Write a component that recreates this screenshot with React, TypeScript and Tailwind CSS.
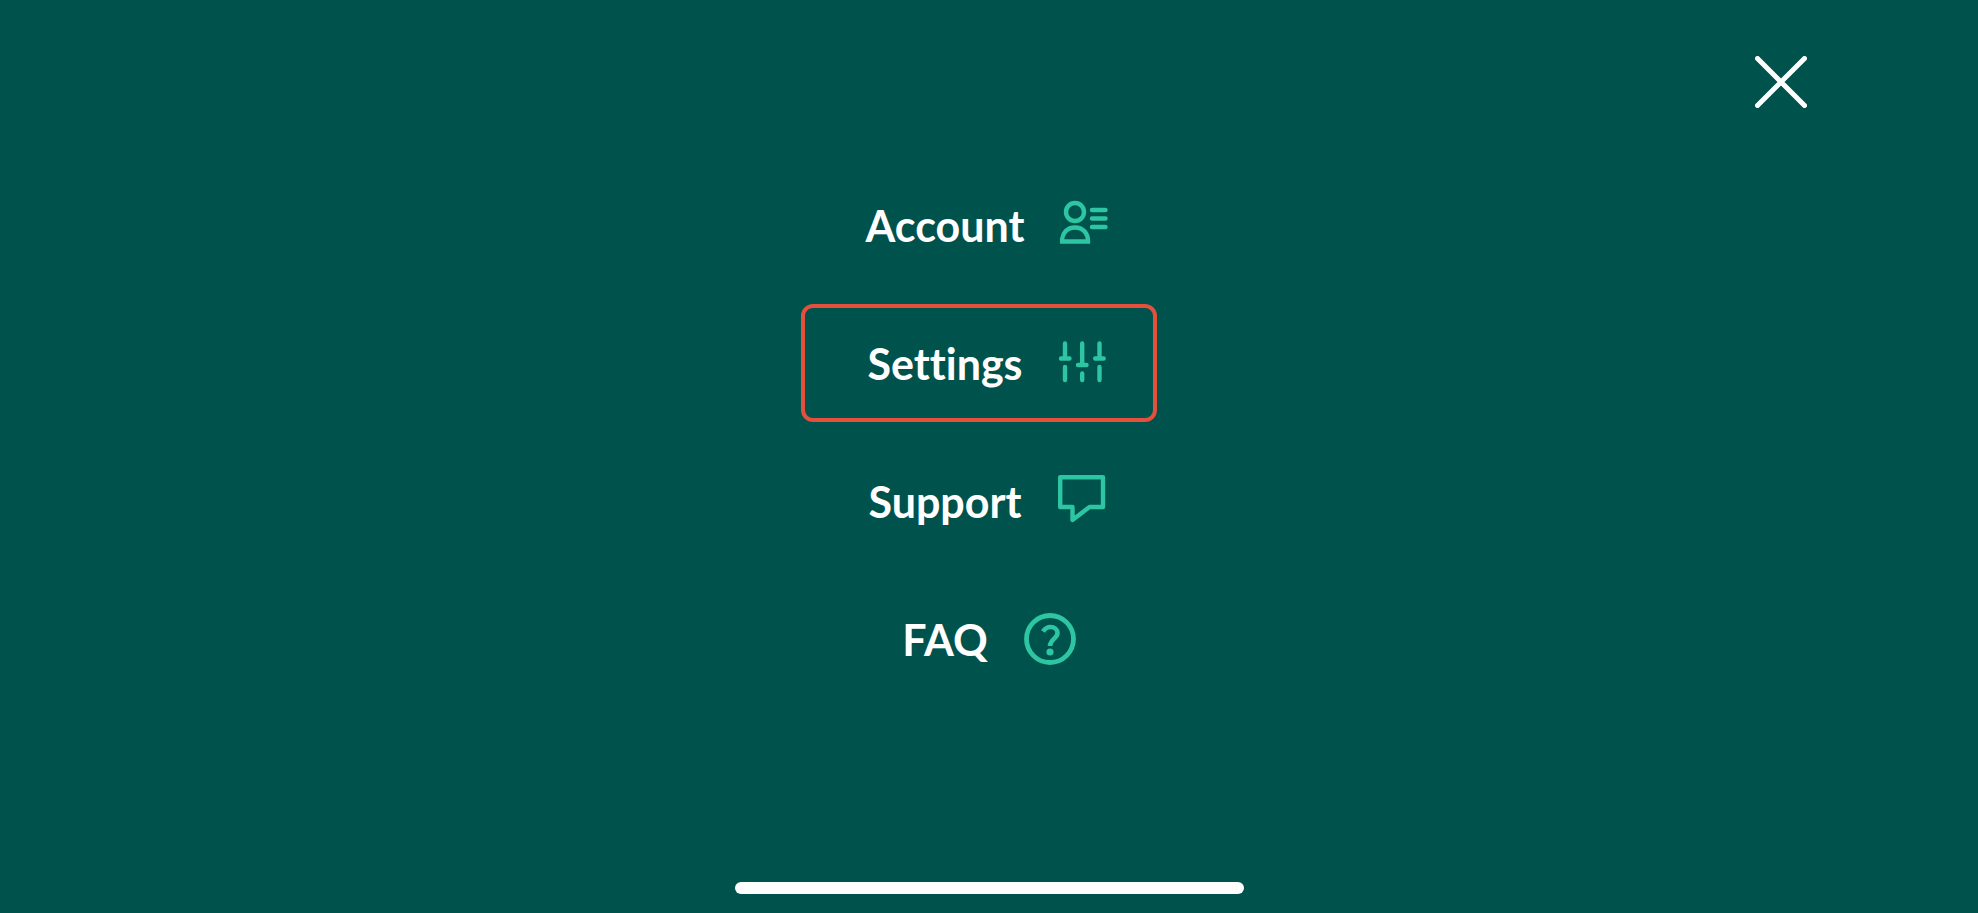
import { useState } from "react";
import type { ReactNode } from "react";

type MenuItem = { key: string; label: string; icon: ReactNode };

const ITEMS: MenuItem[] = [
  { key: "account", label: "Account", icon: <AccountIcon /> },
  { key: "settings", label: "Settings", icon: <SettingsIcon /> },
  { key: "support", label: "Support", icon: <SupportIcon /> },
  { key: "faq", label: "FAQ", icon: <FaqIcon /> },
];

export default function App() {
  const [active, setActive] = useState("settings");

  return (
    <div className="flex min-h-screen flex-col bg-[#00524d] font-['Lato',sans-serif] text-white">
      <header className="flex justify-end pt-14 pr-[171px]">
        <button type="button" aria-label="Close menu" className="h-[52px] w-[52px]">
          <svg viewBox="0 0 52 52" className="h-full w-full" fill="none" stroke="currentColor" strokeWidth="5" strokeLinecap="round">
            <path d="M2.5 2.5 49.5 49.5M49.5 2.5 2.5 49.5" />
          </svg>
        </button>
      </header>

      <nav className="flex flex-1 flex-col items-center gap-5 pt-[58px]">
        {ITEMS.map((item) => (
          <a
            key={item.key}
            href={`#${item.key}`}
            onClick={() => setActive(item.key)}
            className="relative flex h-[118px] items-center gap-9 text-[43px] leading-[52px] font-bold [font-variant-ligatures:none]"
          >
            <span className="pt-0.5">{item.label}</span>
            <span className="h-[52px] w-[52px] text-[#2dc5a2]">{item.icon}</span>
            {active === item.key && (
              <span className="pointer-events-none absolute inset-y-0 -right-[46px] -left-[66px] rounded-xl border-4 border-[#e5503c]" />
            )}
          </a>
        ))}
      </nav>

      {/* home indicator */}
      <div className="mx-auto mb-[19px] h-3 w-[509px] rounded-full bg-white" />
    </div>
  );
}

function AccountIcon() {
  return (
    <svg viewBox="0 0 52 52" className="h-full w-full" fill="none" stroke="currentColor" strokeWidth="4.4">
      <circle cx="15" cy="13" r="9" />
      <path d="M2 42.500C2 33.5 7.500 28.500 15 28.500S28 33.500 28 42.500Z" />
      <path d="M32 11H45.500M32 19.500H45.500M32 28H45.500" strokeLinecap="round" />
    </svg>
  );
}

function SettingsIcon() {
  return (
    <svg viewBox="0 0 52 52" className="h-full w-full" fill="none" stroke="currentColor" strokeWidth="4.4" strokeLinecap="round">
      <path d="M6 6.500V21.500M2 21.500H10.500M6 30V43" />
      <path d="M23.200 6.500V28M19 28H27.500M23.200 36.500V43" />
      <path d="M40.500 6.500V21.500M36.200 21.500H44.700M40.500 30V43" />
    </svg>
  );
}

function SupportIcon() {
  return (
    <svg viewBox="0 0 52 52" className="h-full w-full" fill="none" stroke="currentColor" strokeWidth="4.4" strokeLinejoin="round">
      <path d="M2.200 2.200H45V32H31.500L14.500 45V32H2.200Z" />
    </svg>
  );
}

function FaqIcon() {
  return (
    <svg viewBox="0 0 52 52" className="h-full w-full" fill="none" stroke="currentColor" strokeWidth="4.800">
      <circle cx="26" cy="26" r="23.500" />
      <path d="M19 18.500C21 15.500 23.500 14 26.500 14C30.500 14 33.500 16.500 33.500 20C33.500 25.500 26.200 26 26 33" strokeWidth="4.600" />
      <circle cx="26" cy="39" r="3.600" fill="currentColor" stroke="none" />
    </svg>
  );
}
